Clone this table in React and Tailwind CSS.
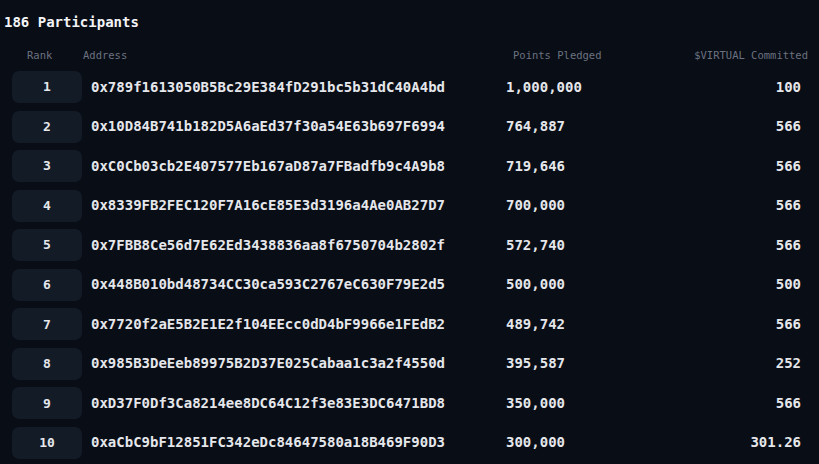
const rows = [
  ['1', '0x789f1613050B5Bc29E384fD291bc5b31dC40A4bd', '1,000,000', '100'],
  ['2', '0x10D84B741b182D5A6aEd37f30a54E63b697F6994', '764,887', '566'],
  ['3', '0xC0Cb03cb2E407577Eb167aD87a7FBadfb9c4A9b8', '719,646', '566'],
  ['4', '0x8339FB2FEC120F7A16cE85E3d3196a4Ae0AB27D7', '700,000', '566'],
  ['5', '0x7FBB8Ce56d7E62Ed3438836aa8f6750704b2802f', '572,740', '566'],
  ['6', '0x448B010bd48734CC30ca593C2767eC630F79E2d5', '500,000', '500'],
  ['7', '0x7720f2aE5B2E1E2f104EEcc0dD4bF9966e1FEdB2', '489,742', '566'],
  ['8', '0x985B3DeEeb89975B2D37E025Cabaa1c3a2f4550d', '395,587', '252'],
  ['9', '0xD37F0Df3Ca8214ee8DC64C12f3e83E3DC6471BD8', '350,000', '566'],
  ['10', '0xaCbC9bF12851FC342eDc84647580a18B469F90D3', '300,000', '301.26'],
];

export default function App() {
  return (
    <div className="w-[819px] h-[464px] overflow-hidden bg-[#090d16] text-white font-['DejaVu_Sans_Mono',monospace]">
      <h2 className="pl-[4px] pt-[12px] h-[42px] text-[14px] leading-[20px] font-bold text-[#f3f4f6]">
        186 Participants
      </h2>
      <div className="flex items-center h-[28px] text-[10.5px] text-[#6b7280]">
        <div className="w-[80px] pl-[27px]">Rank</div>
        <div className="w-[433px] pl-[3px]">Address</div>
        <div className="flex-1">Points Pledged</div>
        <div className="pr-[11px]">$VIRTUAL Committed</div>
      </div>
      <div className="flex flex-col gap-[7.55px] mt-[1px]">
        {rows.map(([rank, addr, pts, virt]) => (
          <div key={rank} className="flex items-center h-[32px] text-[14px] font-bold text-[#e5e7eb]">
            <div className="ml-[12px] w-[70px] h-[32px] rounded-[7px] bg-[#131b27] flex items-center justify-center text-[13px]">
              {rank}
            </div>
            <div className="ml-[9px] w-[415px]">{addr}</div>
            <div className="flex-1">{pts}</div>
            <div className="pr-[18px]">{virt}</div>
          </div>
        ))}
      </div>
    </div>
  );
}
